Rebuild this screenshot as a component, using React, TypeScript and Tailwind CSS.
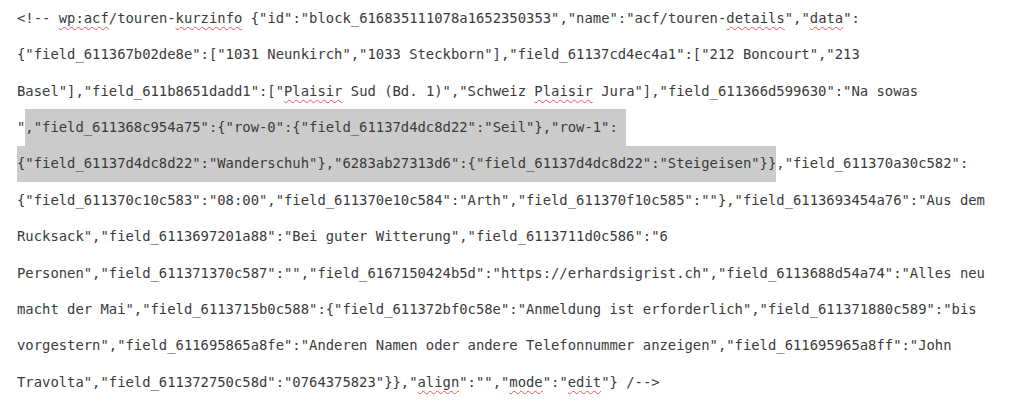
import type { ReactNode } from "react";

// spellcheck squiggle
function Sp({ children }: { children: ReactNode }) {
  return (
    <span className="underline decoration-wavy decoration-[#e25555] decoration-1 underline-offset-[3px]">
      {children}
    </span>
  );
}

function Hl({ children }: { children: ReactNode }) {
  return <span className="self-stretch flex items-center bg-[#cbcbcb]">{children}</span>;
}

const lines: ReactNode[] = [
  <>
    {"<!-- "}
    <Sp>wp:acf</Sp>
    {"/touren-"}
    <Sp>kurzinfo</Sp>
    {' {"id":"block_616835111078a1652350353","name":"acf/touren-'}
    <Sp>details</Sp>
    {'","'}
    <Sp>data</Sp>
    {'":'}
  </>,
  <>{'{"field_611367b02de8e":["1031 Neunkirch","1033 Steckborn"],"field_61137cd4ec4a1":["212 Boncourt","213'}</>,
  <>
    {'Basel"],"field_611b8651dadd1":["'}
    <Sp>Plaisir</Sp>
    {' Sud (Bd. 1)","Schweiz '}
    <Sp>Plaisir</Sp>
    {' Jura"],"field_611366d599630":"Na sowas'}
  </>,
  <>
    {'"'}
    <Hl>{',"field_611368c954a75":{"row-0":{"field_61137d4dc8d22":"Seil"},"row-1": '}</Hl>
  </>,
  <>
    <Hl>{'{"field_61137d4dc8d22":"Wanderschuh"},"6283ab27313d6":{"field_61137d4dc8d22":"Steigeisen"}}'}</Hl>
    {',"field_611370a30c582":'}
  </>,
  <>{'{"field_611370c10c583":"08:00","field_611370e10c584":"Arth","field_611370f10c585":""},"field_6113693454a76":"Aus dem'}</>,
  <>{'Rucksack","field_6113697201a88":"Bei guter Witterung","field_6113711d0c586":"6'}</>,
  <>{'Personen","field_611371370c587":"","field_6167150424b5d":"https://erhardsigrist.ch","field_6113688d54a74":"Alles neu'}</>,
  <>{'macht der Mai","field_6113715b0c588":{"field_611372bf0c58e":"Anmeldung ist erforderlich","field_611371880c589":"bis'}</>,
  <>{'vorgestern","field_611695865a8fe":"Anderen Namen oder andere Telefonnummer anzeigen","field_611695965a8ff":"John'}</>,
  <>
    {'Travolta","field_611372750c58d":"0764375823"}},"'}
    <Sp>align</Sp>
    {'":"","'}
    <Sp>mode</Sp>
    {'":"'}
    <Sp>edit</Sp>
    {'"} /-->'}
  </>,
];

export default function App() {
  return (
    <div className="w-[1024px] h-[412px] overflow-hidden bg-white pl-[17px] text-[#3a3a3a] text-[13.87px] font-['DejaVu_Sans_Mono',monospace]">
      {lines.map((line, i) => (
        <div key={i} className="h-[36.4px] flex items-center whitespace-pre">
          {line}
        </div>
      ))}
    </div>
  );
}
